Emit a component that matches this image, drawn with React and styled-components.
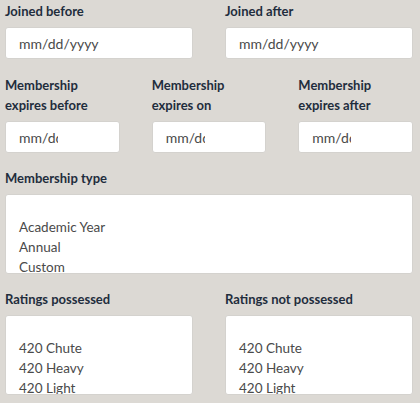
import styled, { createGlobalStyle } from "styled-components";

const GlobalStyle = createGlobalStyle`
    body {
        margin: 0;
        background: #dcd9d4;
        font-family: Lato, "Open Sans", sans-serif;
    }
`

const Form = styled.div`
    width: 420px;
    padding: 0 7px 0 5px;
    box-sizing: border-box;
    display: flex;
    flex-direction: column;
`

const Row = styled.div`
    display: grid;
    grid-template-columns: repeat(${props => props.cols}, 1fr);
    column-gap: 32px;
    margin-bottom: ${props => props.gap}px;
`

const Field = styled.div`
    display: flex;
    flex-direction: column;
`

const Label = styled.label`
    font-size: 13px;
    font-weight: 700;
    line-height: 20px;
    color: #1f2d3d;
    padding-top: 1px;
    margin-bottom: 6px;
`

const DateBox = styled.div`
    height: 32px;
    background: #fff;
    border: 1px solid #d4d2ce;
    border-radius: 3px;
    box-sizing: border-box;
    display: flex;
    align-items: center;
    padding-left: 13px;
`

const DateText = styled.span`
    font-size: 14px;
    color: #4a4a4a;
    white-space: nowrap;
    overflow: hidden;
    max-width: ${props => props.clip ? "39px" : "none"};
`

const ListBox = styled.div`
    height: 80px;
    background: #fff;
    border: 1px solid #d4d2ce;
    border-radius: 3px;
    box-sizing: border-box;
    overflow: hidden;
    padding: 22px 0 0 13px;
`

const Option = styled.div`
    font-size: 13.5px;
    line-height: 20px;
    color: #4a4a4a;
`

function DateField({ label, clip }) {
    return (
        <Field>
            <Label>{label}</Label>
            <DateBox>
                <DateText clip={clip}>mm/dd/yyyy</DateText>
            </DateBox>
        </Field>
    )
}

function ListField({ label, options }) {
    return (
        <Field>
            <Label>{label}</Label>
            <ListBox>
                {options.map(o => <Option key={o}>{o}</Option>)}
            </ListBox>
        </Field>
    )
}

const ratings = ["420 Chute", "420 Heavy", "420 Light"];

export default function App() {
    return (
        <Form>
            <GlobalStyle />
            <Row cols={2} gap={15}>
                <DateField label="Joined before" />
                <DateField label="Joined after" />
            </Row>
            <Row cols={3} gap={14}>
                <DateField label={<>Membership<br />expires before</>} clip />
                <DateField label={<>Membership<br />expires on</>} clip />
                <DateField label={<>Membership<br />expires after</>} clip />
            </Row>
            <Row cols={1} gap={14}>
                <ListField label="Membership type" options={["Academic Year", "Annual", "Custom"]} />
            </Row>
            <Row cols={2} gap={0}>
                <ListField label="Ratings possessed" options={ratings} />
                <ListField label="Ratings not possessed" options={ratings} />
            </Row>
        </Form>
    )
}
